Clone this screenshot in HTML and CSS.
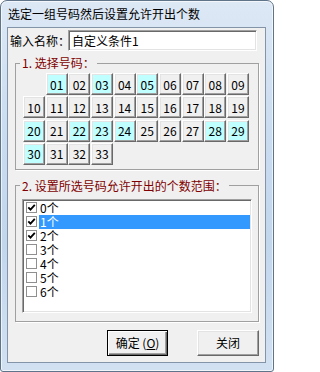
FILE: index.html
```html
<!DOCTYPE html>
<html lang="zh-CN">
<head>
<meta charset="utf-8">
<title>选定一组号码然后设置允许开出个数</title>
<link rel="stylesheet" href="styles.css">
</head>
<body>
<div class="window">
  <div class="titlebar">选定一组号码然后设置允许开出个数</div>
  <div class="client">
    <div class="name-row">
      <span class="name-label">输入名称：</span>
      <div class="textbox">自定义条件1</div>
    </div>
    <fieldset class="group g1">
      <legend>1. 选择号码：</legend>
      <div class="grid">
        <span class="blank"></span>
        <span class="num on">01</span><span class="num">02</span><span class="num on">03</span><span class="num">04</span><span class="num on">05</span><span class="num">06</span><span class="num">07</span><span class="num">08</span><span class="num">09</span>
        <span class="num">10</span><span class="num">11</span><span class="num">12</span><span class="num">13</span><span class="num">14</span><span class="num">15</span><span class="num">16</span><span class="num">17</span><span class="num">18</span><span class="num">19</span>
        <span class="num on">20</span><span class="num">21</span><span class="num on">22</span><span class="num on">23</span><span class="num on">24</span><span class="num">25</span><span class="num">26</span><span class="num">27</span><span class="num on">28</span><span class="num on">29</span>
        <span class="num on">30</span><span class="num">31</span><span class="num">32</span><span class="num">33</span>
      </div>
    </fieldset>
    <fieldset class="group g2">
      <legend>2. 设置所选号码允许开出的个数范围：</legend>
      <div class="listbox">
        <div class="item"><span class="cb"><svg viewBox="0 0 9 9" width="9" height="9"><path d="M1.3 4.3 L3.5 6.7 L7.8 1.8" /></svg></span><span class="item-text">0个</span></div>
        <div class="item"><span class="cb"><svg viewBox="0 0 9 9" width="9" height="9"><path d="M1.3 4.3 L3.5 6.7 L7.8 1.8" /></svg></span><span class="item-text selected">1个</span></div>
        <div class="item"><span class="cb"><svg viewBox="0 0 9 9" width="9" height="9"><path d="M1.3 4.3 L3.5 6.7 L7.8 1.8" /></svg></span><span class="item-text">2个</span></div>
        <div class="item"><span class="cb"></span><span class="item-text">3个</span></div>
        <div class="item"><span class="cb"></span><span class="item-text">4个</span></div>
        <div class="item"><span class="cb"></span><span class="item-text">5个</span></div>
        <div class="item"><span class="cb"></span><span class="item-text">6个</span></div>
      </div>
    </fieldset>
    <div class="actions">
      <button class="btn default" type="button">确定 (<u>O</u>)</button>
      <button class="btn close" type="button">关闭</button>
    </div>
  </div>
</div>
</body>
</html>
```

FILE: styles.css
```css
* { box-sizing: border-box; }
html, body { margin: 0; padding: 0; }
body {
  width: 274px;
  height: 372px;
  overflow: hidden;
  background: #ffffff;
  font-family: "Noto Sans CJK SC", "Noto Sans", sans-serif;
  font-size: 12px;
  color: #000;
}
.window {
  width: 274px;
  height: 372px;
  display: flex;
  flex-direction: column;
  border: 1px solid #5f7389;
  border-radius: 7px 7px 3px 3px;
  background: linear-gradient(180deg, #dde8f5 0%, #cadcf0 35%, #c2d6ec 65%, #d2e1f2 100%);
  box-shadow: inset 0 0 0 1px rgba(255, 255, 255, 0.65);
}
.titlebar {
  height: 26px;
  line-height: 26px;
  padding-left: 7px;
  font-size: 12px;
  color: #000;
  white-space: nowrap;
}
.client {
  flex: 1;
  margin: 0 7px 8px 6px;
  border: 1px solid #8494a8;
  background: #f0f0f0;
  display: flex;
  flex-direction: column;
}
.name-row {
  display: flex;
  align-items: center;
  margin-top: 2px;
  height: 21px;
}
.name-label {
  width: 60px;
  padding-left: 2px;
  line-height: 14px;
  white-space: nowrap;
}
.textbox {
  width: 189px;
  height: 21px;
  border: 1px solid;
  border-color: #a0a0a0 #ffffff #ffffff #a0a0a0;
  box-shadow: inset 1px 1px 0 #696969, inset -1px -1px 0 #e3e3e3;
  background: #fff;
  padding-left: 3px;
  line-height: 19px;
  white-space: nowrap;
}
.group {
  margin: 5px 6px 0 7px;
  border: 1px solid #a0a0a0;
  box-shadow: 1px 1px 0 #ffffff;
  min-width: 0;
}
.group legend {
  padding: 0 2px;
  line-height: 14px;
  color: #800000;
  white-space: nowrap;
}
.g1 {
  padding: 3px 6px 4px 7px;
}
.g1 legend { margin-left: -3px; }
.g2 {
  margin-top: 9px;
  padding: 6px 6px 8px 6px;
}
.g2 legend { margin-left: -2px; }
.grid {
  display: grid;
  grid-template-columns: repeat(10, 22px);
  grid-auto-rows: 22px;
  column-gap: 0.67px;
  row-gap: 1.33px;
}
.num {
  display: flex;
  align-items: center;
  justify-content: center;
  background: #f0f0f0;
  border: 1px solid;
  border-color: #ffffff #696969 #696969 #ffffff;
  box-shadow: inset -1px -1px 0 #a0a0a0, inset 1px 1px 0 #e3e3e3;
  line-height: 14px;
  padding-top: 1px;
}
.num.on { background: #c0ffff; }
.listbox {
  height: 114px;
  border: 1px solid;
  border-color: #a0a0a0 #ffffff #ffffff #a0a0a0;
  box-shadow: inset 1px 1px 0 #696969, inset -1px -1px 0 #e3e3e3;
  background: #fff;
  padding: 1px;
}
.item {
  display: flex;
  align-items: center;
  height: 14px;
}
.cb {
  flex: none;
  width: 11px;
  height: 11px;
  margin-left: 2px;
  border: 1px solid #8f8f8f;
  background: #fff;
  display: flex;
  align-items: center;
  justify-content: center;
}
.cb svg { display: block; }
.cb path {
  fill: none;
  stroke: #000;
  stroke-width: 1.8;
}
.item-text {
  flex: 1;
  margin-left: 2px;
  padding-left: 1px;
  height: 14px;
  line-height: 14px;
  white-space: nowrap;
}
.item-text.selected {
  background: #3399ff;
  color: #fff;
}
.actions {
  display: flex;
  justify-content: flex-end;
  gap: 29px;
  margin-top: 8px;
  padding-right: 6px;
}
.btn {
  width: 61px;
  height: 26px;
  padding: 0;
  font-family: inherit;
  font-size: 12px;
  color: #000;
  background: #f0f0f0;
  border: 1px solid;
  border-color: #ffffff #696969 #696969 #ffffff;
  box-shadow: inset -1px -1px 0 #a0a0a0, inset 1px 1px 0 #e3e3e3;
}
.btn.close { width: 62px; }
.btn.default {
  border-color: #000;
  box-shadow: inset 1px 1px 0 #ffffff, inset -1px -1px 0 #696969, inset -2px -2px 0 #a0a0a0;
}
.btn u { text-decoration: underline; }
```
